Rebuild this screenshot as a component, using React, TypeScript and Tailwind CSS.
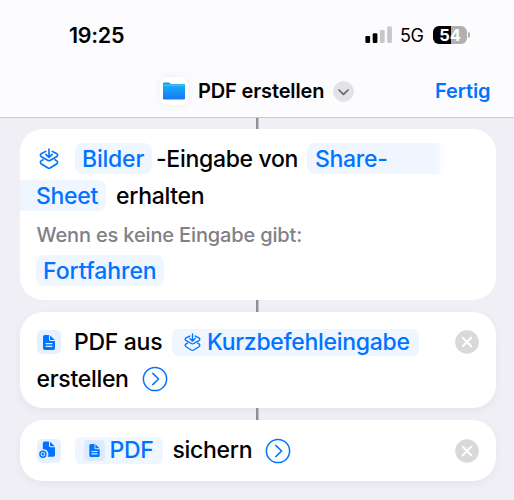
import React from 'react';

interface IconProps {
  className?: string;
}

function ShortcutInputIcon({ className = '' }: IconProps) {
  return (
    <svg className={className} viewBox="0 0 20 22" fill="none" stroke="#0073ff" strokeWidth="1.6" strokeLinecap="round" strokeLinejoin="round" aria-hidden="true">
      <path d="M6.8 3.4 2.5 5.5Q.2 7 2.5 8.8L8.6 12.2Q10 13 11.4 12.2L17.5 8.8Q19.8 7 17.5 5.5L13.2 3.4" />
      <path d="M4 11.8 2.5 12.6Q.2 14.2 2.5 16L8.6 19.8Q10 20.6 11.4 19.8L17.5 16Q19.8 14.2 17.5 12.6L16 11.8" />
      <path d="M10 1v8M6.9 6.4 10 9.4l3.1-3" />
    </svg>
  );
}

function DocumentIcon({ className = '' }: IconProps) {
  return (
    <svg className={className} viewBox="0 0 12 15" fill="none" aria-hidden="true">
      <path d="M1.8 0H6V4.6Q6 6 7.4 6H12V13.2Q12 15 10.2 15H1.8Q0 15 0 13.2V1.8Q0 0 1.8 0Z" fill="#0073ff" />
      <path d="M7 0.2 11.8 5H7.6Q7 5 7 4.4Z" fill="#0073ff" />
      <path d="M3 8.6h6M3 11.4h6" stroke="#dcecff" strokeWidth="1.2" strokeLinecap="round" />
    </svg>
  );
}

function SaveDocumentIcon({ className = '' }: IconProps) {
  return (
    <svg className={className} viewBox="0 0 17 18" fill="none" aria-hidden="true">
      <path d="M5.6 0.6H10V4.8Q10 6.2 11.4 6.2H16V13.9Q16 15.7 14.2 15.7H8.8A5 5 0 0 0 3.8 8.2V2.4Q3.8 .6 5.6 .6Z" fill="#0073ff" />
      <path d="M11 0.8 15.8 5.2H11.6Q11 5.2 11 4.6Z" fill="#0073ff" />
      <circle cx="3.9" cy="13.2" r="3" stroke="#0073ff" strokeWidth="1.4" />
      <path d="M3.9 11.7v3M2.4 13.2h3" stroke="#0073ff" strokeWidth="1.2" />
    </svg>
  );
}

function ExpandButton({ className = '' }: IconProps) {
  return (
    <svg className={className} viewBox="0 0 26 26" fill="none" stroke="#0073ff" strokeLinecap="round" strokeLinejoin="round" role="img" aria-label="Mehr anzeigen">
      <circle cx="13" cy="13" r="11.6" strokeWidth="1.5" />
      <path d="m10.8 7.4 5.8 5.6-5.8 5.6" strokeWidth="1.5" />
    </svg>
  );
}

function RemoveButton() {
  return (
    <svg className="ml-auto h-6 w-6 shrink-0" viewBox="0 0 24 24" fill="none" role="img" aria-label="Entfernen">
      <circle cx="12" cy="12" r="11.8" fill="#d9d9db" />
      <path d="m7.8 7.8 8.4 8.4m0-8.4-8.4 8.4" stroke="#fff" strokeWidth="2" strokeLinecap="round" />
    </svg>
  );
}

function Connector({ className = '' }: IconProps) {
  return <div className={`ml-[256px] w-[2px] shrink-0 border-r border-[#c2c2c9] bg-[#8f8f97] box-content ${className}`} />;
}

function StatusBar() {
  return (
    <div className="flex h-[70px] items-center pl-[69px]">
      <span className="w-[296px] text-[21.5px] font-[570] tracking-[-0.3px]">19:25</span>
      <svg className="h-[18px] w-[27px]" viewBox="0 0 27 18" aria-hidden="true">
        <rect x="0.4" y="10" width="4.7" height="7" rx="1.2" fill="#000" />
        <rect x="7.7" y="7.3" width="4.7" height="9.7" rx="1.2" fill="#000" />
        <rect x="15" y="4" width="4.7" height="13" rx="1.2" fill="#c7c7c9" />
        <rect x="22.2" y="0.5" width="4.7" height="16.5" rx="1.2" fill="#c7c7c9" />
      </svg>
      <span className="ml-[8px] mt-[1px] w-[33px] text-[18px] tracking-[-0.4px]">5G</span>
      <div className="flex h-[18px] w-[34px] items-center justify-center rounded-[6px] bg-linear-to-r from-black from-54% to-[#b0b0b1] to-54% text-[16.5px] font-bold text-white">
        54
      </div>
      <div className="ml-[1px] h-[6px] w-[2px] rounded-r-full bg-[#b0b0b1]" />
    </div>
  );
}

function Header() {
  return (
    <header className="h-[118px] shrink-0 border-b border-[#c9c8cd] bg-[#fcfcfe]">
      <StatusBar />
      <div className="flex h-[42px] items-center pl-[160px]">
        <div className="flex h-[28px] w-[28px] items-center justify-center rounded-[7px] bg-white shadow-[0_0_8px_rgba(0,0,0,0.06)]">
          <svg className="h-[18px] w-[22px]" viewBox="0 0 22 18" aria-hidden="true">
            <defs>
              <linearGradient id="folder" x1="0" y1="0" x2="0" y2="1">
                <stop offset="0" stopColor="#1cb0f8" />
                <stop offset="1" stopColor="#1676f3" />
              </linearGradient>
            </defs>
            <path d="M0 1.8Q0 .5 1.3.5H6L8 2H20.7Q22 2 22 3.3V8H0Z" fill="#129ce0" />
            <rect y="2.8" width="22" height="14.7" rx="1.3" fill="url(#folder)" />
            <path d="M.8 3h20.4" stroke="#7bd3fb" strokeWidth="0.7" />
          </svg>
        </div>
        <h1 className="ml-[10px] w-[135px] whitespace-nowrap text-[20px] font-[560] tracking-[-0.14px]">PDF erstellen</h1>
        <svg className="h-[21px] w-[21px]" viewBox="0 0 21 21" fill="none" aria-hidden="true">
          <circle cx="10.5" cy="10.5" r="10.4" fill="#e3e3e6" />
          <path d="m6 9 4.5 4.3L15 9" stroke="#68686c" strokeWidth="1.7" strokeLinecap="round" strokeLinejoin="round" />
        </svg>
        <button className="ml-[81px] text-[20px] font-[560] tracking-[-0.1px] text-[#0073ff]">Fertig</button>
      </div>
    </header>
  );
}

export default function App() {
  return (
    <div className="flex h-[500px] w-[514px] flex-col overflow-hidden bg-[#efeff5] font-['Inter','Liberation_Sans',sans-serif] text-black">
      <Header />
      <Connector className="h-[11px]" />

      <section className="ml-[19.5px] h-[171px] w-[476px] shrink-0 overflow-hidden whitespace-nowrap rounded-[23px] bg-white pt-[14px] text-[23px] font-[450] leading-[33px] tracking-[-0.3px]">
        <div className="flex h-[31px] items-start pl-[19.5px]">
          <ShortcutInputIcon className="mt-[5px] h-[22px] w-[20px]" />
          <span className="ml-[16px] h-[31px] w-[77px] rounded-[8px] bg-[#eff6ff] pl-[7px] tracking-[-0.2px] text-[#0073ff]">Bilder</span>
          <span className="ml-[4px] w-[102.5px]">-Eingabe</span>
          <span className="w-[48.5px]">von</span>
          <span className="h-[31px] w-[138px] rounded-l-[8px] bg-linear-to-r from-[#eff6ff] from-92% to-white pl-[8px] text-[#0073ff]">Share-</span>
        </div>
        <div className="mt-[6px] flex h-[31px]">
          <span className="w-[86.5px] rounded-r-[8px] bg-[#eff6ff] pl-[16.5px] text-[#0073ff]">Sheet</span>
          <span className="ml-[10px]">erhalten</span>
        </div>
        <p className="mt-[8px] h-[31px] pl-[17px] text-[20px] font-medium tracking-[-0.15px] text-[#808085]">Wenn es keine Eingabe gibt:</p>
        <div className="mt-[5px] ml-[16.5px] h-[31px] w-[128px] rounded-[8px] bg-[#eff6ff] pl-[7px] tracking-[-0.05px] text-[#0073ff]">Fortfahren</div>
      </section>

      <Connector className="h-[12px]" />

      <section className="ml-[19.5px] h-[96px] w-[476px] shrink-0 whitespace-nowrap rounded-[23px] bg-white pt-[15px] pr-[16.5px] pl-[17px] text-[23px] font-[450] leading-[30px] tracking-[-0.3px] shadow-[0_3px_8px_rgba(60,60,100,0.06)]">
        <div className="flex h-[30px] items-center">
          <div className="flex h-[24px] w-[24px] items-center justify-center rounded-[5px] bg-[#e5f1ff]">
            <DocumentIcon className="h-[15px] w-[12px]" />
          </div>
          <span className="ml-[13.5px] w-[97.5px]">PDF aus</span>
          <span className="flex h-[27px] w-[247px] items-center rounded-[6px] bg-[#eff6ff] pl-[12px] tracking-[-0.3px] text-[#0073ff]">
            <ShortcutInputIcon className="mr-[6.5px] h-[19px] w-[17px]" />
            Kurzbefehleingabe
          </span>
          <RemoveButton />
        </div>
        <div className="mt-[7px] flex h-[30px] items-center">
          <span className="w-[105px]">erstellen</span>
          <ExpandButton className="h-[26px] w-[26px]" />
        </div>
      </section>

      <Connector className="h-[12px]" />

      <section className="ml-[19.5px] flex h-[61px] w-[476px] shrink-0 items-center whitespace-nowrap rounded-[23px] bg-white pr-[16.5px] pl-[17px] text-[23px] font-[450] tracking-[-0.3px] shadow-[0_3px_8px_rgba(60,60,100,0.06)]">
        <div className="flex h-[24px] w-[24px] items-center justify-center rounded-[5px] bg-[#e5f1ff]">
          <SaveDocumentIcon className="mr-[2px] mb-[1px] h-[18px] w-[17px]" />
        </div>
        <span className="ml-[14px] flex h-[27px] w-[88px] items-center rounded-[6px] bg-[#eff6ff] pl-[9px] text-[#0073ff]">
          <span className="mr-[5px] flex h-[21px] w-[21px] items-center justify-center rounded-[4px] bg-[#dcecfd]">
            <DocumentIcon className="h-[13px] w-[11px]" />
          </span>
          PDF
        </span>
        <span className="ml-[10px] w-[92.5px]">sichern</span>
        <ExpandButton className="h-[26px] w-[26px]" />
        <RemoveButton />
      </section>
    </div>
  );
}
